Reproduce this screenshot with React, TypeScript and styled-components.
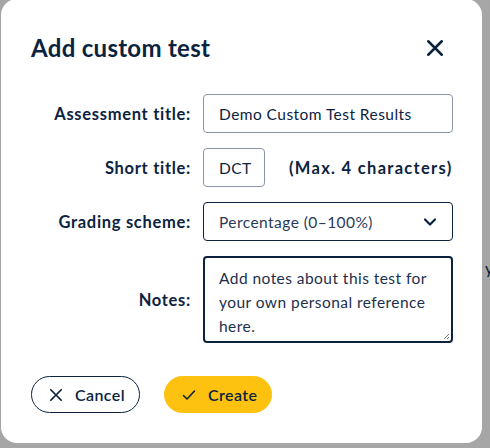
import styled, { createGlobalStyle } from 'styled-components'

const ink = '#0c2340'

const GlobalStyle = createGlobalStyle`
  html, body {
    margin: 0;
    padding: 0;
  }
  body {
    width: 490px;
    height: 448px;
    overflow: hidden;
    background: #a6a6a6;
    font-family: Lato, "Noto Sans", sans-serif;
    color: ${ink};
  }
`

const Screen = styled.div`
  position: relative;
  width: 490px;
  height: 448px;
  overflow: hidden;
`

const PageBehind = styled.div`
  padding: 258px 0 0 485px;
  font-size: 16px;
  color: #0a1b30;
  white-space: nowrap;
`

const Dialog = styled.div`
  position: absolute;
  top: -1px;
  left: 1px;
  width: 481px;
  height: 444px;
  box-sizing: border-box;
  background: #fff;
  border-radius: 16px;
  padding: 34px 30px 0 30px;
  display: flex;
  flex-direction: column;
`

const Header = styled.div`
  display: flex;
  align-items: center;
  justify-content: space-between;
  padding-right: 6px;
`

const Title = styled.h2`
  margin: 0;
  font-size: 24px;
  font-weight: 700;
  letter-spacing: 0.3px;
  line-height: 30px;
`

const CloseButton = styled.button`
  border: 0;
  background: none;
  padding: 0;
  width: 22px;
  height: 22px;
  display: flex;
  align-items: center;
  justify-content: center;
  color: ${ink};
  cursor: pointer;
`

const Form = styled.div`
  margin-top: 31px;
  display: grid;
  grid-template-columns: 160px 250px;
  column-gap: 12px;
  row-gap: 15px;
  align-items: center;
`

const Label = styled.label`
  text-align: right;
  font-size: 16.5px;
  font-weight: 700;
  letter-spacing: 0.7px;
  white-space: nowrap;
`

const Field = styled.div`
  display: flex;
  align-items: center;
  gap: 24px;
`

const TextInput = styled.div<{ $width?: number }>`
  box-sizing: border-box;
  width: ${({ $width }) => ($width ? `${$width}px` : '100%')};
  height: 39px;
  border: 1px solid #8b97a8;
  border-radius: 4px;
  padding: 0 15px;
  display: flex;
  align-items: center;
  font-size: 15.5px;
  letter-spacing: 0.45px;
  color: ${ink};
`

const Hint = styled.span`
  font-size: 16.5px;
  font-weight: 700;
  letter-spacing: 1.3px;
  white-space: nowrap;
`

const Select = styled.div`
  box-sizing: border-box;
  height: 39px;
  border: 1px solid ${ink};
  border-radius: 4px;
  padding: 0 14px 0 15px;
  display: flex;
  align-items: center;
  justify-content: space-between;
  font-size: 15.5px;
  letter-spacing: 0.45px;
  color: #2a3b5a;
`

const TextArea = styled.div`
  position: relative;
  box-sizing: border-box;
  height: 87px;
  border: 2px solid ${ink};
  border-radius: 4px;
  padding: 8px 14px;
  font-size: 15.5px;
  letter-spacing: 0.45px;
  line-height: 24px;
  color: #1d2f4d;
`

const Grip = styled.svg`
  position: absolute;
  right: 1px;
  bottom: 1px;
`

const Actions = styled.div`
  margin-top: 33px;
  display: flex;
  gap: 24px;
`

const Button = styled.button<{ $primary?: boolean }>`
  box-sizing: border-box;
  height: 37px;
  border-radius: 19px;
  padding: 0 14px 0 17px;
  display: flex;
  align-items: center;
  gap: 12px;
  font-family: inherit;
  font-size: 16px;
  font-weight: 600;
  letter-spacing: 0.4px;
  color: ${ink};
  cursor: pointer;
  border: 1px solid ${({ $primary }) => ($primary ? '#fdc210' : ink)};
  background: ${({ $primary }) => ($primary ? '#fdc210' : '#fff')};
`

const Cross = ({ size, stroke }: { size: number; stroke: number }) => (
  <svg width={size} height={size} viewBox="0 0 16 16" fill="none">
    <path d="M2 2L14 14M14 2L2 14" stroke={ink} strokeWidth={stroke} strokeLinecap="round" />
  </svg>
)

export default function App() {
  return (
    <>
      <GlobalStyle />
      <Screen>
        <PageBehind>y</PageBehind>
        <Dialog>
          <Header>
            <Title>Add custom test</Title>
            <CloseButton aria-label="Close">
              <Cross size={18} stroke={2.2} />
            </CloseButton>
          </Header>
          <Form>
            <Label>Assessment title:</Label>
            <TextInput>Demo Custom Test Results</TextInput>

            <Label>Short title:</Label>
            <Field>
              <TextInput $width={62}>DCT</TextInput>
              <Hint>(Max. 4 characters)</Hint>
            </Field>

            <Label>Grading scheme:</Label>
            <Select>
              <span>Percentage (0–100%)</span>
              <svg width="16" height="16" viewBox="0 0 16 16" fill="none">
                <path d="M3 5.5L8 10.5L13 5.5" stroke={ink} strokeWidth="2.2" strokeLinecap="round" strokeLinejoin="round" />
              </svg>
            </Select>

            <Label>Notes:</Label>
            <TextArea>
              Add notes about this test for your own personal reference here.
              <Grip width="8" height="8" viewBox="0 0 8 8">
                <path d="M7 2L2 7M7 5L5 7" stroke="#6b7280" strokeWidth="1" />
              </Grip>
            </TextArea>
          </Form>
          <Actions>
            <Button>
              <Cross size={14} stroke={2} />
              Cancel
            </Button>
            <Button $primary>
              <svg width="14" height="14" viewBox="0 0 14 14" fill="none">
                <path d="M1.5 7.5L5 11L12.5 3" stroke={ink} strokeWidth="1.6" strokeLinecap="round" strokeLinejoin="round" />
              </svg>
              Create
            </Button>
          </Actions>
        </Dialog>
      </Screen>
    </>
  )
}
